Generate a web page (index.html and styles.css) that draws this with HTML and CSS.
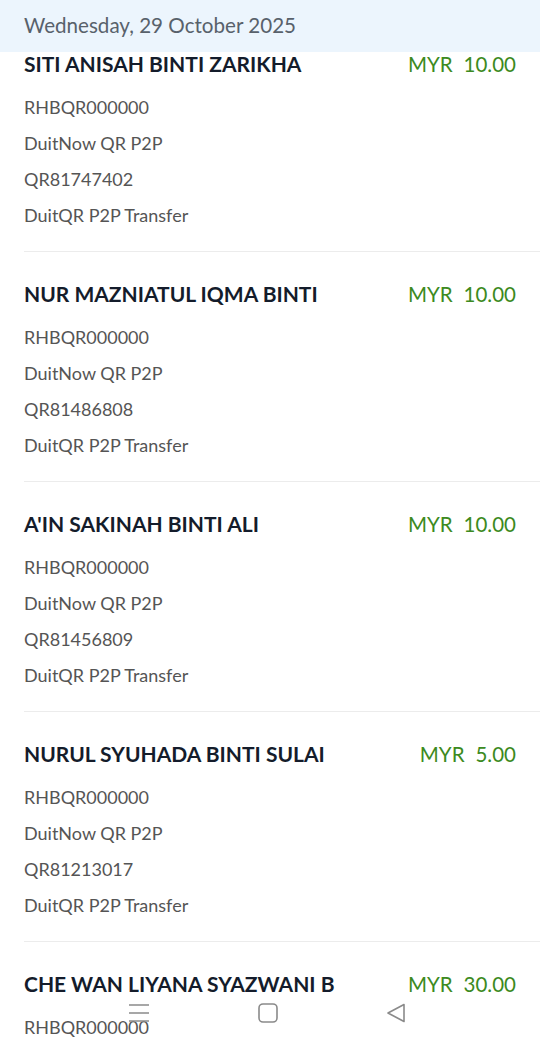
FILE: index.html
```html
<!DOCTYPE html>
<html lang="en">
<head>
  <meta charset="UTF-8" />
  <meta name="viewport" content="width=device-width, initial-scale=1.0"/>
  <title>Transaction History</title>
  <link rel="stylesheet" href="styles.css">
</head>
<body>

  <div class="date-bar">Wednesday, 29 October 2025</div>

  <div class="list">
    <div class="txn first">
      <div class="txn-head">
        <span class="name">SITI ANISAH BINTI ZARIKHA</span>
        <span class="amount">MYR<span class="value">10.00</span></span>
      </div>
      <div class="line">RHBQR000000</div>
      <div class="line">DuitNow QR P2P</div>
      <div class="line">QR81747402</div>
      <div class="line">DuitQR P2P Transfer</div>
    </div>

    <div class="txn">
      <div class="txn-head">
        <span class="name">NUR MAZNIATUL IQMA BINTI</span>
        <span class="amount">MYR<span class="value">10.00</span></span>
      </div>
      <div class="line">RHBQR000000</div>
      <div class="line">DuitNow QR P2P</div>
      <div class="line">QR81486808</div>
      <div class="line">DuitQR P2P Transfer</div>
    </div>

    <div class="txn">
      <div class="txn-head">
        <span class="name">A'IN SAKINAH BINTI ALI</span>
        <span class="amount">MYR<span class="value">10.00</span></span>
      </div>
      <div class="line">RHBQR000000</div>
      <div class="line">DuitNow QR P2P</div>
      <div class="line">QR81456809</div>
      <div class="line">DuitQR P2P Transfer</div>
    </div>

    <div class="txn">
      <div class="txn-head">
        <span class="name">NURUL SYUHADA BINTI SULAI</span>
        <span class="amount">MYR<span class="value">5.00</span></span>
      </div>
      <div class="line">RHBQR000000</div>
      <div class="line">DuitNow QR P2P</div>
      <div class="line">QR81213017</div>
      <div class="line">DuitQR P2P Transfer</div>
    </div>

    <div class="txn last">
      <div class="txn-head">
        <span class="name">CHE WAN LIYANA SYAZWANI B</span>
        <span class="amount">MYR<span class="value">30.00</span></span>
      </div>
      <div class="line">RHBQR000000</div>
    </div>
  </div>

  <div class="nav-bar">
    <svg class="nav-icon" width="22" height="20" viewBox="0 0 22 20">
      <path d="M1 2h20M1 10h20M1 18h20" stroke="#8a8a8a" stroke-width="1.6" fill="none"/>
    </svg>
    <svg class="nav-icon" width="20" height="20" viewBox="0 0 20 20">
      <rect x="1" y="1" width="18" height="18" rx="4" stroke="#8a8a8a" stroke-width="1.6" fill="none"/>
    </svg>
    <svg class="nav-icon" width="20" height="20" viewBox="0 0 20 20">
      <path d="M18 1.5L2 10l16 8.5z" stroke="#8a8a8a" stroke-width="1.6" stroke-linejoin="round" fill="none"/>
    </svg>
  </div>

</body>
</html>
```

FILE: styles.css
```css
body {
  font-family: Lato, 'Noto Sans', sans-serif;
  margin: 0;
  background: #fff;
  color: #333;
  height: 1047px;
  overflow: hidden;
}

.date-bar {
  height: 52px;
  line-height: 50px;
  padding-left: 24px;
  background-color: #ecf5fd;
  color: #58616b;
  font-size: 20.6px;
}

.txn {
  margin-left: 24px;
  padding: 30px 24px 18px 0;
  border-bottom: 1px solid #ececec;
}

.txn.first {
  padding-top: 0;
}

.txn.last {
  border-bottom: none;
  padding-bottom: 0;
}

.txn-head {
  display: flex;
  justify-content: space-between;
  align-items: center;
  line-height: 24px;
  margin-bottom: 13px;
}

.name {
  font-size: 21px;
  font-weight: bold;
  color: #141c2b;
}

.amount {
  font-size: 20.5px;
  color: #3c8a21;
}

.amount .value {
  margin-left: 11px;
}

.line {
  line-height: 36px;
  font-size: 18px;
  color: #555;
}

.nav-bar {
  position: fixed;
  left: 0;
  right: 0;
  bottom: 24px;
  height: 20px;
  display: flex;
  justify-content: center;
  gap: 108px;
  padding-right: 6px;
}
```
